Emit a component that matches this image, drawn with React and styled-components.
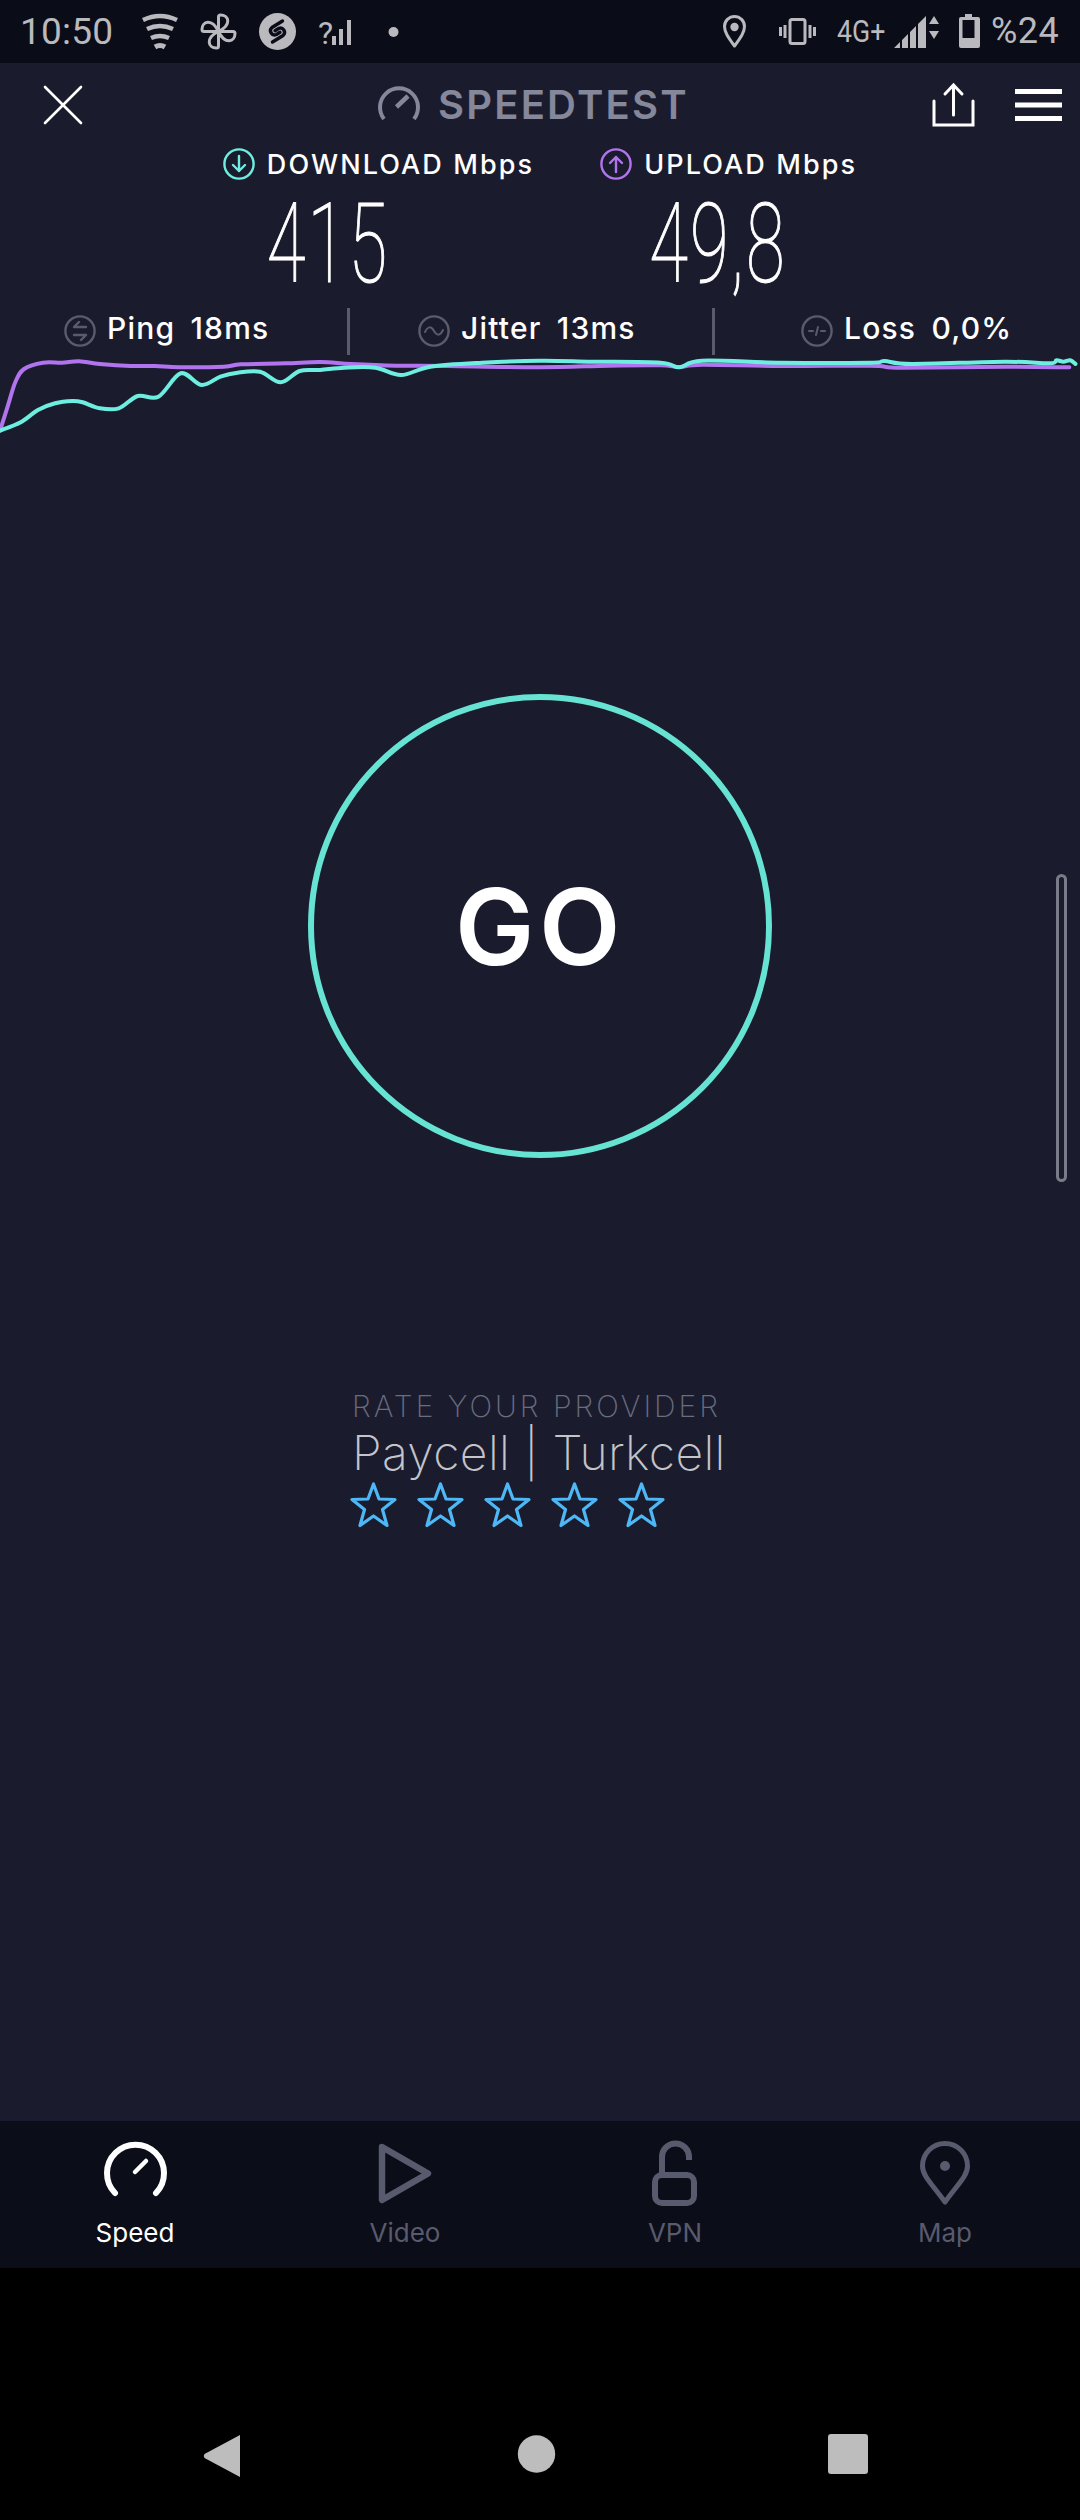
import React from 'react';
import styled, { createGlobalStyle } from 'styled-components';

const Global = createGlobalStyle`
  html, body { margin: 0; padding: 0; background: #000; }
  * { box-sizing: border-box; }
`;

const UI = `Inter, "Open Sans", sans-serif`;
const ANDROID = `Roboto, sans-serif`;

const Page = styled.div`
  width: 1080px; height: 2520px; display: flex; flex-direction: column;
  background: #000; overflow: hidden; font-family: ${UI};
`;
const StatusBar = styled.div`
  height: 63px; background: #0a0c18; display: flex; align-items: center; flex: none;
  color: #b9b9be; font-family: ${ANDROID};
`;
const Clock = styled.span`
  font-size: 37px; line-height: 63px; margin-left: 20px; width: 121px; letter-spacing: 0.2px;
`;
const StatusIcon = styled.svg`
  flex: none; display: block; margin-left: ${p => p.$ml || 0}px;
`;
const QMark = styled.span`
  font-size: 32px; line-height: 63px; width: 14px; margin-left: 21px; padding-top: 3px;
`;
const Network = styled.span`
  font-size: 31px; line-height: 63px; width: 50px; margin-left: 20px; display: inline-block;
  transform: scaleX(.86); transform-origin: left center; white-space: nowrap;
`;
const Percent = styled.span`
  font-size: 36px; line-height: 63px; margin-left: 10px; white-space: nowrap; letter-spacing: .5px;
`;
const Main = styled.main`
  flex: 1; background: #1a1c2e; position: relative; display: flex; flex-direction: column;
`;
const Header = styled.header`
  height: 72px; display: flex; align-items: center; flex: none; padding: 21px 0 9px;
`;
const HeaderIcon = styled.svg`
  display: block; flex: none; margin-left: ${p => p.$ml || 0}px;
`;
const Title = styled.h1`
  margin: 0 0 0 16px; width: 252px; font-size: 40px; line-height: 40px; font-weight: 600;
  color: #85879a; letter-spacing: 2.2px; white-space: nowrap;
`;
const LabelRow = styled.div`
  display: flex; justify-content: center; gap: 66px; margin-top: 13px; height: 32px; flex: none;
`;
const Label = styled.div`
  display: flex; align-items: center; gap: 12px; color: #fff; font-size: 27px; font-weight: 500;
  white-space: nowrap; letter-spacing: 2.1px;
`;
const Values = styled.div`
  display: grid; grid-template-columns: 390px 390px; padding-left: 133px; height: 128px; flex: none;
`;
const Value = styled.div`
  text-align: center; color: #fff; font-family: ${ANDROID}; font-weight: 100; font-size: 112px;
  line-height: 128px; transform: scaleX(.63); -webkit-text-stroke: 1.2px #fff; letter-spacing: 3.4px;
`;
const Stats = styled.div`
  display: grid; grid-template-columns: 347px 4px 361px 4px 1fr; height: 47px; flex: none;
`;
const Stat = styled.div`
  display: flex; align-items: center; gap: 11px; padding-left: ${p => p.$pad}px; color: #fff;
  font-size: 30px; font-weight: 500; white-space: nowrap; padding-bottom: 2px; letter-spacing: 1.2px;
`;
const StatText = styled.span`
  margin-top: -5px;
`;
const StatValue = styled.span`
  margin-left: 6px;
`;
const Divider = styled.div`
  background: #5a5c6e; width: 3px;
`;
const Chart = styled.svg`
  display: block; flex: none;
`;
const GoButton = styled.div`
  width: 464px; height: 464px; border-radius: 50%; border: 6px solid #67e3d3; flex: none;
  margin: 249px auto 0; display: flex; align-items: center; justify-content: center;
  color: #fff; font-size: 106px; font-weight: 600; letter-spacing: 4.5px;
`;
const Rating = styled.section`
  margin-top: 231px; padding-left: 352px; flex: none;
`;
const RateTitle = styled.div`
  font-size: 30px; line-height: 34px; font-weight: 200; color: #6a6c7f; white-space: nowrap;
  letter-spacing: 3px;
`;
const Provider = styled.div`
  font-size: 48px; line-height: 58px; font-weight: 200; color: #c4c4ca; white-space: nowrap;
  letter-spacing: .4px; padding-top: 1px;
`;
const Stars = styled.div`
  display: flex; gap: 20px; margin-top: 0; margin-left: -2px;
`;
const Scrollbar = styled.div`
  position: absolute; left: 1056px; top: 811px; width: 11px; height: 308px;
  border: 3px solid #7a7b88; border-radius: 6px;
`;
const Nav = styled.nav`
  height: 147px; flex: none; background: #0b0d19; display: grid; grid-template-columns: repeat(4, 270px);
`;
const Tab = styled.div`
  display: flex; flex-direction: column; align-items: center; padding-top: 17px;
  color: ${p => p.$active ? '#fff' : '#585a6d'}; font-size: 26px; line-height: 30px; font-weight: 400;
`;
const TabIcon = styled.svg`
  display: block; margin-bottom: 10px;
`;
const SystemBar = styled.div`
  height: 252px; flex: none; background: #000; display: flex; align-items: flex-start; padding-top: 166px;
`;
const SysButton = styled.svg`
  display: block; flex: none; margin-left: ${p => p.$ml}px;
`;

const G = '#b9b9be';
const abs = (x, y, w, h) => ({ viewBox: `${x} ${y} ${w} ${h}`, width: w, height: h });

function smooth(pts) {
  let d = `M${pts[0][0]} ${pts[0][1]}`;
  for (let i = 0; i < pts.length - 1; i++) {
    const p0 = pts[i - 1] || pts[i], p1 = pts[i], p2 = pts[i + 1], p3 = pts[i + 2] || p2;
    const c1 = [p1[0] + (p2[0] - p0[0]) / 6, p1[1] + (p2[1] - p0[1]) / 6];
    const c2 = [p2[0] - (p3[0] - p1[0]) / 6, p2[1] - (p3[1] - p1[1]) / 6];
    d += `C${c1[0].toFixed(1)} ${c1[1].toFixed(1)} ${c2[0].toFixed(1)} ${c2[1].toFixed(1)} ${p2[0].toFixed(1)} ${p2[1].toFixed(1)}`;
  }
  return d;
}
const mapL = ([x, y]) => [x / 2.904, 190 + y / 3];
const mapR = ([x, y]) => [540 + x / 2.904, 190 + y / 3];

const purple = [
  ...[[0,722],[22,650],[45,575],[70,537],[125,518],[180,518],[230,514],[290,522],[380,528],[450,528],[520,532],[650,530],[700,523],[830,520],[930,516],[1020,522],[1150,527],[1300,528]].map(mapL),
  ...[[0,532],[200,527],[350,526],[405,531],[470,524],[700,528],[960,527],[1050,533],[1350,530],[1537,532]].map(mapR),
];
const teal = [
  ...[[0,722],[60,697],[110,660],[160,640],[210,633],[240,637],[290,655],[345,655],[400,618],[460,620],[525,550],[585,585],[640,560],[690,548],[755,545],[815,577],[870,543],[930,540],[1000,533],[1090,533],[1165,555],[1250,530],[1400,518]].map(mapL),
  ...[[0,512],[150,515],[350,518],[405,532],[470,512],[700,518],[960,518],[1000,513],[1080,522],[1350,515],[1480,520],[1500,511],[1520,515],[1540,511],[1555,522]].map(mapR),
];

const Star = () => (
  <svg width="47" height="46" viewBox="0 0 47 46" fill="none" stroke="#4db8f5" strokeWidth="3.2" strokeLinejoin="round">
    <path d="M23.5 2 L29 17 L45 17.5 L32.5 27.5 L37 43.5 L23.5 34 L10 43.5 L14.5 27.5 L2 17.5 L18 17 Z" />
  </svg>
);

const CircleBadge = ({ color, children }) => (
  <svg width="32" height="32" viewBox="0 0 32 32" fill="none" stroke={color} strokeWidth="2.4" strokeLinecap="round" strokeLinejoin="round">
    <circle cx="16" cy="16" r="14.6" />
    {children}
  </svg>
);

export default function App() {
  return (
    <Page>
      <Global />
      <StatusBar>
        <Clock>10:50</Clock>
        <StatusIcon {...abs(141, 12, 38, 38)} fill="none" stroke={G} strokeWidth="4.5">
          <path d="M143 19 Q160 11 177 19" />
          <path d="M147 28 Q160 22 173 28" />
          <path d="M151 37 Q160 33 169 37" />
          <path d="M155 46 Q160 43 165 46" strokeWidth="5" />
        </StatusIcon>
        <StatusIcon {...abs(200, 13, 37, 38)} $ml={21} fill="none" stroke={G} strokeWidth="3" strokeLinejoin="round">
          {[0, 90, 180, 270].map(r => (
            <path key={r} transform={`rotate(${r} 218.500 31.500)`} d="M218.500 31.500 V17 a2 2 0 0 1 2 -2 C229 15 232 25 218.500 31.500 Z" />
          ))}
        </StatusIcon>
        <StatusIcon {...abs(257, 12, 39, 39)} $ml={21}>
          <circle cx="276.5" cy="31.5" r="18.5" fill={G} />
          <path d="M281.500 21 L271 27.500 a4.200 4.200 0 0 0 4.500 7 l3.500 -2.200 M271.500 42 L282 35.500 a4.200 4.200 0 0 0 -4.500 -7 l-3.500 2.200" fill="none" stroke="#0a0c18" strokeWidth="3.4" strokeLinecap="round" />
        </StatusIcon>
        <QMark>?</QMark>
        <StatusIcon {...abs(331, 18, 21, 28)} fill={G}>
          <rect x="331" y="36" width="4" height="9" />
          <rect x="338" y="29" width="4" height="16" />
          <rect x="346" y="20" width="4" height="25" />
        </StatusIcon>
        <StatusIcon {...abs(386, 26, 13, 12)} $ml={34}><circle cx="392.500" cy="32" r="5" fill={G} /></StatusIcon>
        <StatusIcon {...abs(721, 14, 25, 35)} $ml={322} fill="none" stroke={G} strokeWidth="3">
          <path d="M733.500 46 C727 37 723.500 32 723.500 26.500 a10 10 0 0 1 20 0 C743.500 32 740 37 733.500 46 Z" strokeLinejoin="round" />
          <circle cx="733.500" cy="27" r="4.200" fill={G} stroke="none" />
        </StatusIcon>
        <StatusIcon {...abs(778, 17, 38, 29)} $ml={32} fill="none" stroke={G} strokeWidth="3">
          <rect x="789" y="19.500" width="15" height="24" rx="2" />
          <path d="M784 25 v13 M779.500 27 v9 M809 25 v13 M813.500 27 v9" />
        </StatusIcon>
        <Network>4G+</Network>
        <StatusIcon {...abs(892, 14, 46, 34)} $ml={7} fill={G}>
          <path d="M892 47 L898 41 V47 Z M900 39 L906 33 V47 H900 Z M908 31 L914 25 V47 H908 Z M916 23 L924 15 V47 H916 Z" />
          <path d="M932 15 L937 23 H927 Z M932 38 L937 30 H927 Z" />
        </StatusIcon>
        <StatusIcon {...abs(956, 13, 23, 37)} $ml={18}>
          <path d="M963 14 h7 v3 h6 a2 2 0 0 1 2 2 v27 a2 2 0 0 1 -2 2 h-17 a2 2 0 0 1 -2 -2 v-27 a2 2 0 0 1 2 -2 h4 Z" fill={G} />
          <rect x="960.500" y="20" width="12" height="18" fill="#0a0c18" />
        </StatusIcon>
        <Percent>%24</Percent>
      </StatusBar>
      <Main>
        <Header>
          <HeaderIcon {...abs(42, 84, 42, 42)} $ml={42} stroke="#fff" strokeWidth="2.600" strokeLinecap="round">
            <path d="M45 87 L81 123 M81 87 L45 123" />
          </HeaderIcon>
          <HeaderIcon {...abs(376, 82, 46, 46)} $ml={292} fill="none" stroke="#85879a" strokeWidth="4">
            <path d="M384 119 A19 19 0 1 1 414 119" />
            <path d="M396.500 107 L408 96" strokeWidth="4.500" />
          </HeaderIcon>
          <Title>SPEEDTEST</Title>
          <HeaderIcon {...abs(931, 82, 46, 46)} $ml={241} fill="none" stroke="#fff" strokeWidth="3" strokeLinecap="round">
            <path d="M934 101 V125 H973 V101" />
            <path d="M953.500 115 V86 M945 94 L953.500 85 L962 94" />
          </HeaderIcon>
          <HeaderIcon {...abs(1014, 88, 50, 34)} $ml={37} fill="#fff">
            <rect x="1015" y="89" width="47" height="5" />
            <rect x="1015" y="102.500" width="47" height="5" />
            <rect x="1015" y="116" width="47" height="5" />
          </HeaderIcon>
        </Header>
        <LabelRow>
          <Label>
            <CircleBadge color="#6eeee0">
              <path stroke="#6eeee0" d="M16 8 V23 M10 17 L16 23 L22 17" />
            </CircleBadge>
            DOWNLOAD Mbps
          </Label>
          <Label>
            <CircleBadge color="#b274ee">
              <path stroke="#b274ee" d="M16 24 V9 M10 15 L16 9 L22 15" />
            </CircleBadge>
            UPLOAD Mbps
          </Label>
        </LabelRow>
        <Values>
          <Value>415</Value>
          <Value>49,8</Value>
        </Values>
        <Stats>
          <Stat $pad={64}>
            <CircleBadge color="#5a5c6e">
              <path d="M22 12 H10 L15 7 M10 20 H22 L17 25" strokeWidth="2.4" />
            </CircleBadge>
            <StatText>Ping <StatValue>18ms</StatValue></StatText>
          </Stat>
          <Divider />
          <Stat $pad={67}>
            <CircleBadge color="#5a5c6e">
              <path d="M7 17 C10 11 13 11 16 16 C19 21 22 21 25 15" strokeWidth="2" />
            </CircleBadge>
            <StatText>Jitter <StatValue>13ms</StatValue></StatText>
          </Stat>
          <Divider />
          <Stat $pad={85}>
            <CircleBadge color="#5a5c6e">
              <path d="M8 16 H12 M15 20 L17 12 M20 16 H24" strokeWidth="2" />
            </CircleBadge>
            <StatText>Loss <StatValue>0,0%</StatValue></StatText>
          </Stat>
        </Stats>
        <Chart {...abs(0, 355, 1080, 90)} fill="none" strokeWidth="4" strokeLinecap="round" strokeLinejoin="round">
          <path d={smooth(purple)} stroke="#b274ee" />
          <path d={smooth(teal)} stroke="#6eeee0" />
        </Chart>
        <GoButton>GO</GoButton>
        <Rating>
          <RateTitle>RATE YOUR PROVIDER</RateTitle>
          <Provider>Paycell | Turkcell</Provider>
          <Stars><Star /><Star /><Star /><Star /><Star /></Stars>
        </Rating>
        <Scrollbar />
      </Main>
      <Nav>
        <Tab $active>
          <TabIcon {...abs(94, 2138, 80, 70)} fill="none" stroke="#fff" strokeWidth="6" strokeLinecap="round">
            <path d="M114 2193 A28.500 28.500 0 1 1 155 2193" />
            <path d="M134 2172 L145 2161" strokeWidth="4.500" />
          </TabIcon>
          Speed
        </Tab>
        <Tab>
          <TabIcon {...abs(365, 2138, 80, 70)} fill="none" stroke="#585a6d" strokeWidth="6.500" strokeLinejoin="round">
            <path d="M382 2147 L428 2173.500 L382 2200 Z" />
          </TabIcon>
          Video
        </Tab>
        <Tab>
          <TabIcon {...abs(635, 2138, 80, 70)} fill="none" stroke="#585a6d" strokeWidth="6">
            <rect x="655" y="2175" width="39" height="28" rx="7" />
            <path d="M662 2175 V2157 a13 13 0 0 1 27 0 V2160" />
          </TabIcon>
          VPN
        </Tab>
        <Tab>
          <TabIcon {...abs(905, 2138, 80, 70)} fill="none" stroke="#585a6d" strokeWidth="5">
            <path d="M945 2202 C932 2184 922.500 2176 922.500 2166 a22.500 22.500 0 0 1 45 0 C967.500 2176 958 2184 945 2202 Z" strokeLinejoin="round" />
            <circle cx="945" cy="2166" r="5" fill="#585a6d" stroke="none" />
          </TabIcon>
          Map
        </Tab>
      </Nav>
      <SystemBar>
        <SysButton {...abs(203, 2434, 38, 44)} $ml={203} fill="#bdbdbd">
          <path d="M240 2435 V2477 L204.500 2458 Q203 2456 204.500 2454 Z" />
        </SysButton>
        <SysButton {...abs(517, 2436, 39, 40)} $ml={276}><circle cx="536.500" cy="2456" r="18.700" fill="#bdbdbd" /></SysButton>
        <SysButton {...abs(828, 2436, 40, 40)} $ml={272}><rect x="828" y="2436" width="40" height="40" rx="3" fill="#bdbdbd" /></SysButton>
      </SystemBar>
    </Page>
  );
}
